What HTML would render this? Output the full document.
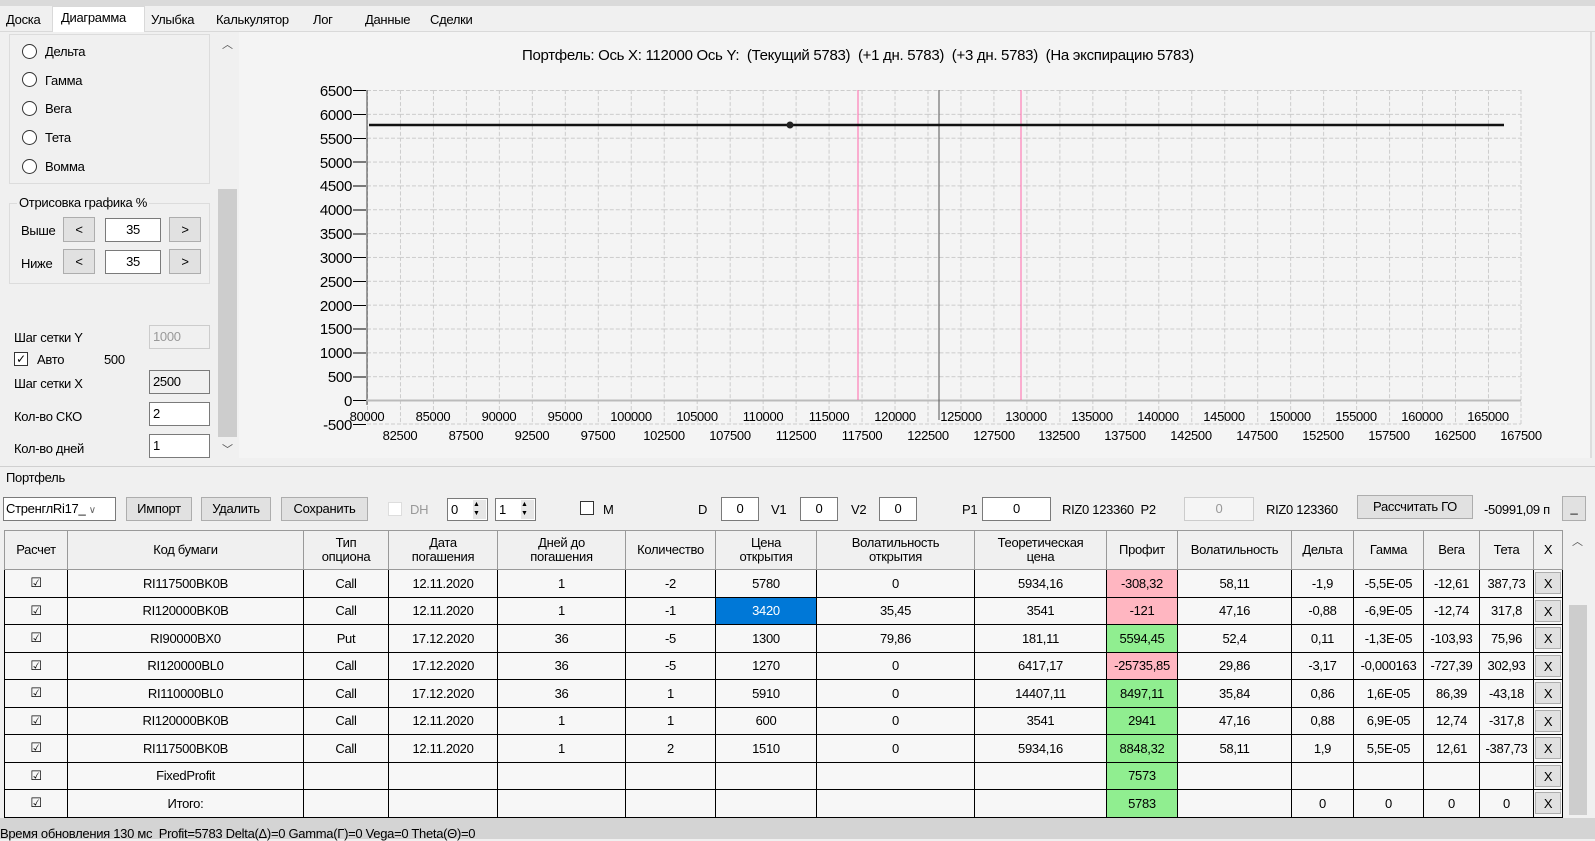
<!DOCTYPE html>
<html><head><meta charset="utf-8"><style>
*{box-sizing:border-box;margin:0;padding:0}
body{width:1595px;height:839px;overflow:hidden;background:#f0f0f0;font-family:"Liberation Sans",sans-serif;font-size:13px;color:#000;position:relative;letter-spacing:-0.3px}
.a{position:absolute;white-space:nowrap}
.btn{position:absolute;background:#e1e1e1;border:1px solid #adadad;text-align:center}
.inp{position:absolute;background:#fff;border:1px solid #7a7a7a;text-align:center}
.rad{position:absolute;width:15px;height:15px;border:1px solid #333;border-radius:50%;background:#fff}
.chk{position:absolute;width:14px;height:14px;border:1px solid #333;background:#fff;font-size:12px;line-height:12px;text-align:center}
table{position:absolute;left:4px;top:530px;border-collapse:collapse;background:#f7f7f7}
td{border:1px solid #000;text-align:center;height:27.5px;padding:0;font-size:13px}
th{border:1px solid #999;background:#f0f0f0;font-weight:normal;height:39px;font-size:13px;line-height:14px}
.r{background:#ffb6c1}.g{background:#90ee90}.sel{background:#0078d7;color:#fff}
.x{background:#e1e1e1;border:1px solid #adadad;display:inline-block;width:26px;height:22px;line-height:22px}
</style></head><body>
<div class="a" style="left:0;top:0;width:1595px;height:6px;background:#dadada"></div>
<div class="a" style="left:0;top:31px;width:1595px;height:1px;background:#d9d9d9"></div>
<div class="a" style="left:6px;top:12px">Доска</div>
<div class="a" style="left:52px;top:6px;width:93px;height:26px;background:#fff;border:1px solid #d9d9d9;border-bottom:none"></div>
<div class="a" style="left:61px;top:10px">Диаграмма</div>
<div class="a" style="left:151px;top:12px">Улыбка</div>
<div class="a" style="left:216px;top:12px">Калькулятор</div>
<div class="a" style="left:313px;top:12px">Лог</div>
<div class="a" style="left:365px;top:12px">Данные</div>
<div class="a" style="left:430px;top:12px">Сделки</div>
<div class="a" style="left:9px;top:34px;width:201px;height:150px;border:1px solid #dcdcdc"></div>
<div class="rad" style="left:22px;top:44px"></div><div class="a" style="left:45px;top:44px">Дельта</div>
<div class="rad" style="left:22px;top:72px"></div><div class="a" style="left:45px;top:73px">Гамма</div>
<div class="rad" style="left:22px;top:101px"></div><div class="a" style="left:45px;top:101px">Вега</div>
<div class="rad" style="left:22px;top:130px"></div><div class="a" style="left:45px;top:130px">Тета</div>
<div class="rad" style="left:22px;top:159px"></div><div class="a" style="left:45px;top:159px">Вомма</div>
<div class="a" style="left:9px;top:203px;width:201px;height:81px;border:1px solid #dcdcdc"></div>
<div class="a" style="left:17px;top:195px;background:#f0f0f0;padding:0 2px">Отрисовка графика %</div>
<div class="a" style="left:21px;top:223px">Выше</div>
<div class="btn" style="left:63px;top:217px;width:32px;height:25px;line-height:23px">&lt;</div>
<div class="inp" style="left:105px;top:218px;width:56px;height:24px;line-height:22px">35</div>
<div class="btn" style="left:169px;top:217px;width:32px;height:25px;line-height:23px">&gt;</div>
<div class="a" style="left:21px;top:256px">Ниже</div>
<div class="btn" style="left:63px;top:249px;width:32px;height:25px;line-height:23px">&lt;</div>
<div class="inp" style="left:105px;top:250px;width:56px;height:24px;line-height:22px">35</div>
<div class="btn" style="left:169px;top:249px;width:32px;height:25px;line-height:23px">&gt;</div>
<div class="a" style="left:14px;top:330px">Шаг сетки Y</div>
<div class="inp" style="left:149px;top:325px;width:61px;height:24px;line-height:22px;text-align:left;padding-left:3px;color:#999;background:#f0f0f0;border-color:#ccc">1000</div>
<div class="chk" style="left:14px;top:352px">✓</div><div class="a" style="left:37px;top:352px">Авто</div><div class="a" style="left:104px;top:352px">500</div>
<div class="a" style="left:14px;top:376px">Шаг сетки X</div>
<div class="inp" style="left:149px;top:370px;width:61px;height:24px;line-height:22px;text-align:left;padding-left:3px;background:#f0f0f0">2500</div>
<div class="a" style="left:14px;top:409px">Кол-во СКО</div>
<div class="inp" style="left:149px;top:402px;width:61px;height:24px;line-height:22px;text-align:left;padding-left:3px">2</div>
<div class="a" style="left:14px;top:441px">Кол-во дней</div>
<div class="inp" style="left:149px;top:434px;width:61px;height:24px;line-height:22px;text-align:left;padding-left:3px">1</div>
<div class="a" style="left:218px;top:34px;width:19px;height:424px;background:#f0f0f0"></div>
<div class="a" style="left:218px;top:189px;width:19px;height:248px;background:#cdcdcd"></div>
<div class="a" style="left:222px;top:36px;color:#555;font-size:11px">︿</div>
<div class="a" style="left:222px;top:441px;color:#555;font-size:11px">﹀</div>
<div class="a" style="left:239px;top:32px;width:1353px;height:426px;background:#f4f4f4;border-right:2px solid #ddd"></div>
<div class="a" style="left:522px;top:47px;font-size:15px">Портфель: Ось X: 112000 Ось Y:&nbsp; (Текущий 5783)&nbsp; (+1 дн. 5783)&nbsp; (+3 дн. 5783)&nbsp; (На экспирацию 5783)</div>
<svg class="a" style="left:0;top:0" width="1595" height="460">
<defs><pattern id="p" x="367" y="90" width="32.97" height="23.85" patternUnits="userSpaceOnUse">
<path d="M0.5 0V23.85M0 0.5H32.97" stroke="#ccc" stroke-dasharray="4 2" fill="none"/></pattern></defs>
<rect x="367" y="90" width="1154" height="334" fill="url(#p)"/>
<path d="M1521 90V424M367 424H1521" stroke="#ccc" stroke-dasharray="4 2"/>
<line x1="367" y1="90" x2="367" y2="405" stroke="#444"/>
<line x1="367" y1="400.5" x2="1521" y2="400.5" stroke="#bbb" stroke-width="2"/>
<line x1="858" y1="90" x2="858" y2="400" stroke="#f6a"/>
<line x1="1021" y1="90" x2="1021" y2="400" stroke="#f6a"/>
<line x1="939" y1="90" x2="939" y2="420" stroke="#555"/>
<line x1="369" y1="125" x2="1504" y2="125" stroke="#111" stroke-width="2.5"/>
<circle cx="790" cy="125" r="3.5" fill="#222"/>
<g font-family="Liberation Sans" font-size="15" text-anchor="end" fill="#000" stroke="#000" stroke-width="0">
<text x="352" y="96">6500</text><text x="352" y="120">6000</text><text x="352" y="144">5500</text><text x="352" y="168">5000</text><text x="352" y="191">4500</text><text x="352" y="215">4000</text><text x="352" y="239">3500</text><text x="352" y="263">3000</text><text x="352" y="287">2500</text><text x="352" y="311">2000</text><text x="352" y="334">1500</text><text x="352" y="358">1000</text><text x="352" y="382">500</text><text x="352" y="406">0</text><text x="352" y="430">-500</text>
</g>
<g stroke="#000"><path d="M353 90.5h13M353 114.5h13M353 138.5h13M353 162h13M353 186h13M353 210h13M353 234h13M353 257.5h13M353 281.5h13M353 305.5h13M353 329h13M353 353h13M353 377h13M353 400.5h13M353 424.5h13"/></g>
<g id="xl" font-family="Liberation Sans" font-size="13" text-anchor="middle">
<text x="367" y="421">80000</text><text x="433" y="421">85000</text><text x="499" y="421">90000</text><text x="565" y="421">95000</text><text x="631" y="421">100000</text><text x="697" y="421">105000</text><text x="763" y="421">110000</text><text x="829" y="421">115000</text><text x="895" y="421">120000</text><text x="961" y="421">125000</text><text x="1026" y="421">130000</text><text x="1092" y="421">135000</text><text x="1158" y="421">140000</text><text x="1224" y="421">145000</text><text x="1290" y="421">150000</text><text x="1356" y="421">155000</text><text x="1422" y="421">160000</text><text x="1488" y="421">165000</text>
<text x="400" y="440">82500</text><text x="466" y="440">87500</text><text x="532" y="440">92500</text><text x="598" y="440">97500</text><text x="664" y="440">102500</text><text x="730" y="440">107500</text><text x="796" y="440">112500</text><text x="862" y="440">117500</text><text x="928" y="440">122500</text><text x="994" y="440">127500</text><text x="1059" y="440">132500</text><text x="1125" y="440">137500</text><text x="1191" y="440">142500</text><text x="1257" y="440">147500</text><text x="1323" y="440">152500</text><text x="1389" y="440">157500</text><text x="1455" y="440">162500</text><text x="1521" y="440">167500</text>
</g>
</svg>
<div class="a" style="left:0;top:466px;width:1595px;height:1px;background:#d0d0d0"></div>
<div class="a" style="left:6px;top:470px">Портфель</div>
<div class="inp" style="left:3px;top:497px;width:113px;height:24px;line-height:22px;text-align:left;padding-left:2px">СтренглRi17_ <span style="color:#666;font-size:10px">∨</span></div>
<div class="btn" style="left:126px;top:497px;width:66px;height:24px;line-height:22px">Импорт</div>
<div class="btn" style="left:201px;top:497px;width:70px;height:24px;line-height:22px">Удалить</div>
<div class="btn" style="left:281px;top:497px;width:87px;height:24px;line-height:22px">Сохранить</div>
<div class="chk" style="left:388px;top:502px;border-color:#ddd"></div><div class="a" style="left:410px;top:502px;color:#999">DH</div>
<div class="inp" style="left:447px;top:498px;width:41px;height:23px;line-height:21px;text-align:left;padding-left:3px">0<span style="position:absolute;right:1px;top:1px;width:13px;height:19px;background:#e6e6e6;font-size:7px;line-height:9px">▲<br>▼</span></div>
<div class="inp" style="left:495px;top:498px;width:41px;height:23px;line-height:21px;text-align:left;padding-left:3px">1<span style="position:absolute;right:1px;top:1px;width:13px;height:19px;background:#e6e6e6;font-size:7px;line-height:9px">▲<br>▼</span></div>
<div class="chk" style="left:580px;top:501px"></div><div class="a" style="left:603px;top:502px">M</div>
<div class="a" style="left:698px;top:502px">D</div><div class="inp" style="left:721px;top:497px;width:38px;height:24px;line-height:22px">0</div>
<div class="a" style="left:771px;top:502px">V1</div><div class="inp" style="left:800px;top:497px;width:38px;height:24px;line-height:22px">0</div>
<div class="a" style="left:851px;top:502px">V2</div><div class="inp" style="left:879px;top:497px;width:38px;height:24px;line-height:22px">0</div>
<div class="a" style="left:962px;top:502px">P1</div><div class="inp" style="left:982px;top:497px;width:69px;height:24px;line-height:22px">0</div>
<div class="a" style="left:1062px;top:502px">RIZ0 123360&nbsp; P2</div>
<div class="inp" style="left:1184px;top:497px;width:70px;height:24px;line-height:22px;color:#999;border-color:#ccc;background:#f5f5f5">0</div>
<div class="a" style="left:1266px;top:502px">RIZ0 123360</div>
<div class="btn" style="left:1357px;top:495px;width:116px;height:24px;line-height:22px">Рассчитать ГО</div>
<div class="a" style="left:1484px;top:502px">-50991,09 п</div>
<div class="btn" style="left:1562px;top:496px;width:24px;height:25px;line-height:22px">_</div>
<table>
<tr><th style="width:63px">Расчет</th><th style="width:236px">Код бумаги</th><th style="width:85px">Тип<br>опциона</th><th style="width:109px">Дата<br>погашения</th><th style="width:128px">Дней до<br>погашения</th><th style="width:90px">Количество</th><th style="width:101px">Цена<br>открытия</th><th style="width:158px">Волатильность<br>открытия</th><th style="width:132px">Теоретическая<br>цена</th><th style="width:71px">Профит</th><th style="width:114px">Волатильность</th><th style="width:62px">Дельта</th><th style="width:70px">Гамма</th><th style="width:56px">Вега</th><th style="width:54px">Тета</th><th style="width:29px">X</th></tr>
<tr><td>☑</td><td>RI117500BK0B</td><td>Call</td><td>12.11.2020</td><td>1</td><td>-2</td><td>5780</td><td>0</td><td>5934,16</td><td class="r">-308,32</td><td>58,11</td><td>-1,9</td><td>-5,5E-05</td><td>-12,61</td><td>387,73</td><td><span class="x">X</span></td></tr>
<tr><td>☑</td><td>RI120000BK0B</td><td>Call</td><td>12.11.2020</td><td>1</td><td>-1</td><td class="sel">3420</td><td>35,45</td><td>3541</td><td class="r">-121</td><td>47,16</td><td>-0,88</td><td>-6,9E-05</td><td>-12,74</td><td>317,8</td><td><span class="x">X</span></td></tr>
<tr><td>☑</td><td>RI90000BX0</td><td>Put</td><td>17.12.2020</td><td>36</td><td>-5</td><td>1300</td><td>79,86</td><td>181,11</td><td class="g">5594,45</td><td>52,4</td><td>0,11</td><td>-1,3E-05</td><td>-103,93</td><td>75,96</td><td><span class="x">X</span></td></tr>
<tr><td>☑</td><td>RI120000BL0</td><td>Call</td><td>17.12.2020</td><td>36</td><td>-5</td><td>1270</td><td>0</td><td>6417,17</td><td class="r">-25735,85</td><td>29,86</td><td>-3,17</td><td>-0,000163</td><td>-727,39</td><td>302,93</td><td><span class="x">X</span></td></tr>
<tr><td>☑</td><td>RI110000BL0</td><td>Call</td><td>17.12.2020</td><td>36</td><td>1</td><td>5910</td><td>0</td><td>14407,11</td><td class="g">8497,11</td><td>35,84</td><td>0,86</td><td>1,6E-05</td><td>86,39</td><td>-43,18</td><td><span class="x">X</span></td></tr>
<tr><td>☑</td><td>RI120000BK0B</td><td>Call</td><td>12.11.2020</td><td>1</td><td>1</td><td>600</td><td>0</td><td>3541</td><td class="g">2941</td><td>47,16</td><td>0,88</td><td>6,9E-05</td><td>12,74</td><td>-317,8</td><td><span class="x">X</span></td></tr>
<tr><td>☑</td><td>RI117500BK0B</td><td>Call</td><td>12.11.2020</td><td>1</td><td>2</td><td>1510</td><td>0</td><td>5934,16</td><td class="g">8848,32</td><td>58,11</td><td>1,9</td><td>5,5E-05</td><td>12,61</td><td>-387,73</td><td><span class="x">X</span></td></tr>
<tr><td>☑</td><td>FixedProfit</td><td></td><td></td><td></td><td></td><td></td><td></td><td></td><td class="g">7573</td><td></td><td></td><td></td><td></td><td></td><td><span class="x">X</span></td></tr>
<tr><td>☑</td><td>Итого:</td><td></td><td></td><td></td><td></td><td></td><td></td><td></td><td class="g">5783</td><td></td><td>0</td><td>0</td><td>0</td><td>0</td><td><span class="x">X</span></td></tr>
</table>
<div class="a" style="left:1567px;top:530px;width:22px;height:287px;background:#f0f0f0"></div>
<div class="a" style="left:1569px;top:605px;width:18px;height:210px;background:#cdcdcd"></div>
<div class="a" style="left:1572px;top:533px;color:#555;font-size:11px">︿</div>
<div class="a" style="left:0;top:818px;width:1595px;height:21px;background:#d4d4d4"></div>
<div class="a" style="left:0;top:826px">Время обновления 130 мс&nbsp; Profit=5783 Delta(Δ)=0 Gamma(Γ)=0 Vega=0 Theta(Θ)=0</div>
</body></html>
